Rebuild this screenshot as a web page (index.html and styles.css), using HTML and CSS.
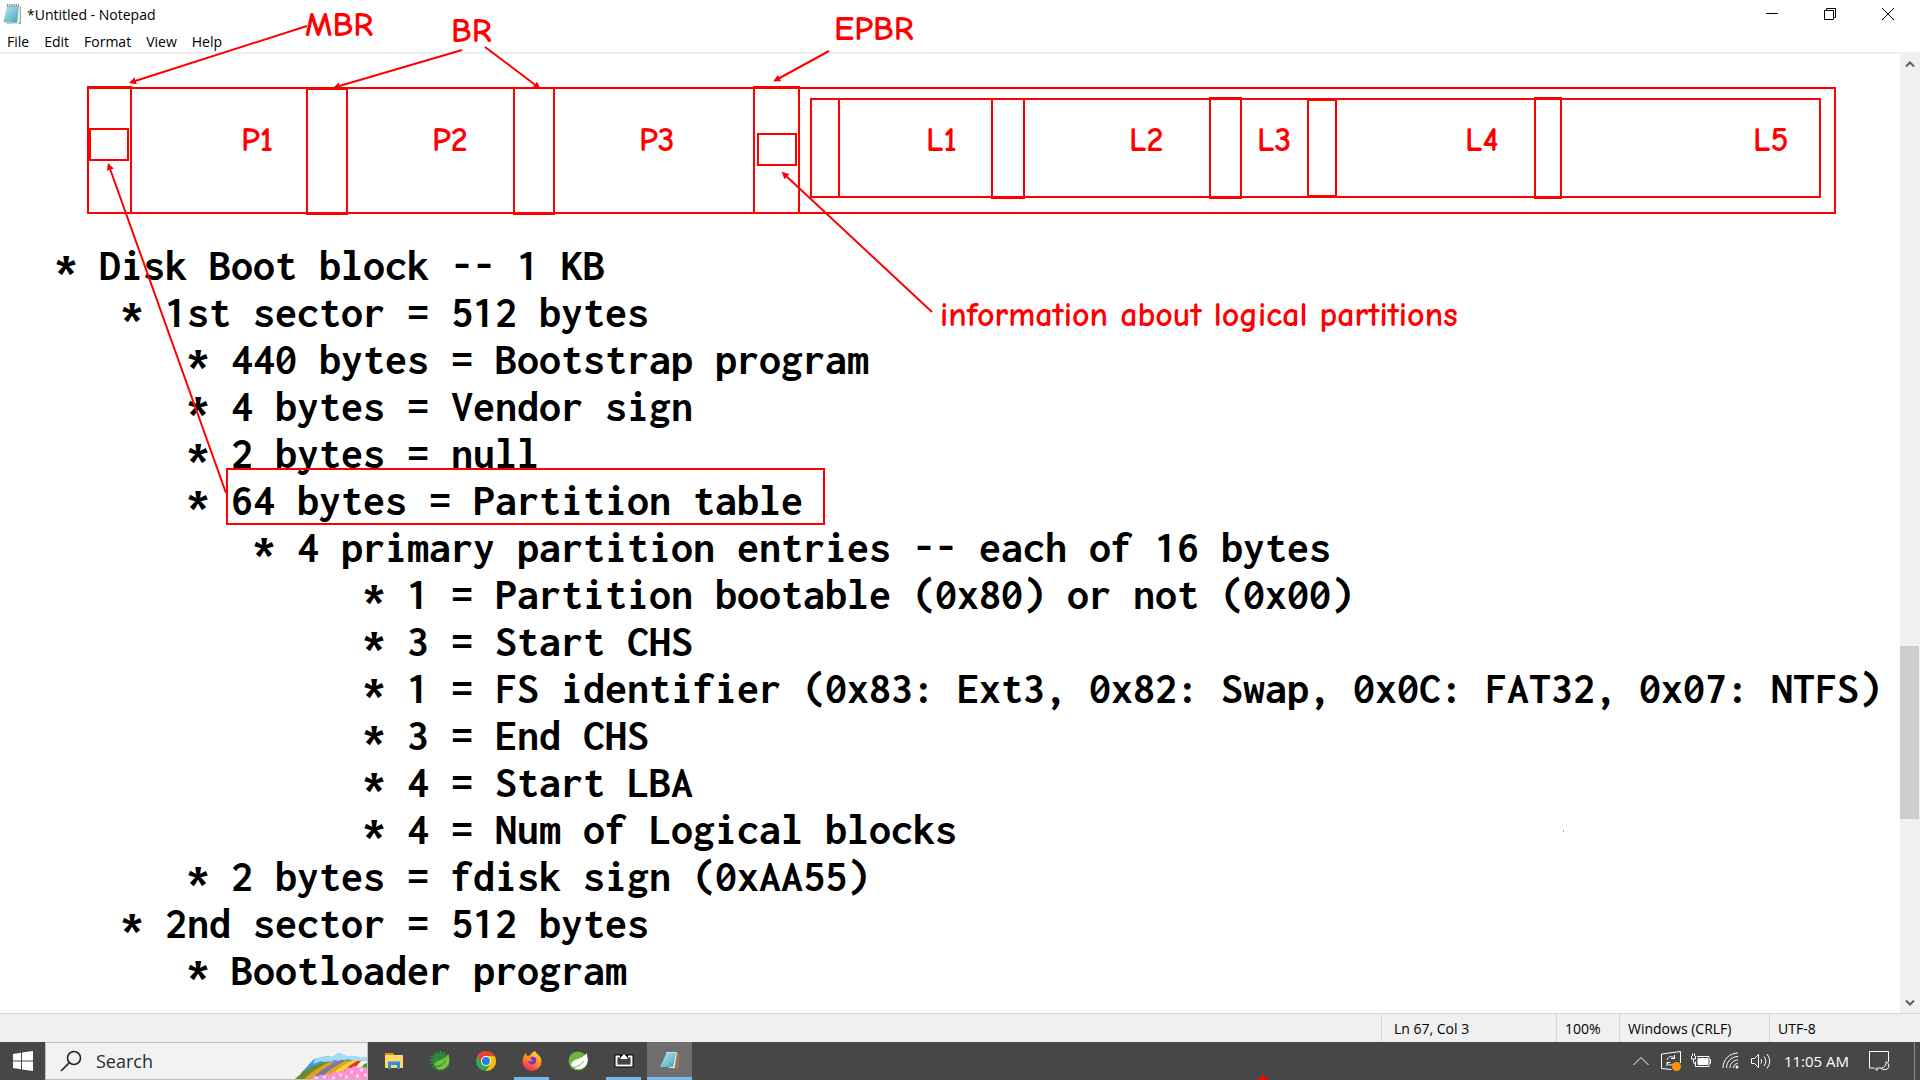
FILE: index.html
```html
<!DOCTYPE html>
<html lang="en">
<head>
<meta charset="utf-8">
<title>*Untitled - Notepad</title>
<link rel="stylesheet" href="styles.css">
</head>
<body>
<div class="desktop">
  <main class="window">
    <header class="titlebar">
      <svg class="app-icon" viewBox="0 0 20 24" aria-hidden="true">
        <defs>
          <linearGradient id="pad" x1="0" y1="0" x2="1" y2="1">
            <stop offset="0" stop-color="#b9e6ee"/><stop offset=".5" stop-color="#7fc8d8"/><stop offset="1" stop-color="#3f9db5"/>
          </linearGradient>
        </defs>
        <path d="M17 3l2 1v19H5l-2-1z" fill="#9b8a60"/>
        <path d="M4 3h14v18l-2 2-15-1z" fill="#e8f4f6"/>
        <path d="M4 3h13l-2 18.500L0 21z" fill="url(#pad)"/>
        <path d="M4 2.500h14" stroke="#7d8a8d" stroke-width="3" stroke-dasharray="1 1"/>
      </svg>
      <h1 class="title">*Untitled - Notepad</h1>
      <div class="controls">
        <button class="control" aria-label="Minimize"><svg width="14" height="14" viewBox="0 0 14 14"><path d="M1 6.500h12"/></svg></button>
        <button class="control" aria-label="Restore"><svg width="14" height="14" viewBox="0 0 14 14"><path d="M1.500 3.500h9v9h-9zM3.500 3.500v-2h9v9h-2"/></svg></button>
        <button class="control" aria-label="Close"><svg width="14" height="14" viewBox="0 0 14 14"><path d="M1 1l12 12M13 1L1 13"/></svg></button>
      </div>
    </header>
    <nav class="menubar" aria-label="Menu">
      <button>File</button><button>Edit</button><button>Format</button><button>View</button><button>Help</button>
    </nav>
    <section class="workspace">
      <textarea class="editor" aria-label="Text editor" spellcheck="false" wrap="off">




  * Disk Boot block -- 1 KB
     * 1st sector = 512 bytes
        * 440 bytes = Bootstrap program
        * 4 bytes = Vendor sign
        * 2 bytes = null
        * 64 bytes = Partition table
           * 4 primary partition entries -- each of 16 bytes
                * 1 = Partition bootable (0x80) or not (0x00)
                * 3 = Start CHS
                * 1 = FS identifier (0x83: Ext3, 0x82: Swap, 0x0C: FAT32, 0x07: NTFS)
                * 3 = End CHS
                * 4 = Start LBA
                * 4 = Num of Logical blocks
        * 2 bytes = fdisk sign (0xAA55)
     * 2nd sector = 512 bytes
        * Bootloader program</textarea>
      <div class="scrollbar">
        <button class="scroll-step" aria-label="Scroll up"><svg width="10" height="8" viewBox="0 0 10 8"><path d="M1 6.500l4-4 4 4"/></svg></button>
        <div class="scroll-track"><div class="scroll-thumb"></div></div>
        <button class="scroll-step" aria-label="Scroll down"><svg width="10" height="8" viewBox="0 0 10 8"><path d="M1 1.500l4 4 4-4"/></svg></button>
      </div>
    </section>
    <footer class="statusbar">
      <span class="status status-position">Ln 67, Col 3</span>
      <span class="status status-zoom">100%</span>
      <span class="status status-eol">Windows (CRLF)</span>
      <span class="status status-encoding">UTF-8</span>
    </footer>
  </main>

  <footer class="taskbar">
    <button class="start" aria-label="Start">
      <svg width="20" height="20" viewBox="0 0 20 20"><path fill="#fff" d="M0 3l8-1.200V9.500H0zM9 1.600L20 0v9.500H9zM0 10.500h8v7.700L0 17zM9 10.500h11V20L9 18.400z"/></svg>
    </button>
    <label class="search">
      <svg width="22" height="22" viewBox="0 0 22 22" fill="none" stroke="#222" stroke-width="1.600"><circle cx="14" cy="8" r="6.500"/><path d="M9.400 12.600L1 21"/></svg>
      <input type="text" placeholder="Search" aria-label="Search">
      <svg class="search-art" width="72" height="26" viewBox="0 0 72 26" aria-hidden="true">
        <path d="M6 20L19 6l6-1 6 -2 6 1 7-4 7 3 8 0 7 2 6-1v22H4z" fill="#3c9be0"/>
        <path d="M20 6l6-1 5-2 6 1 7-4 7 3h8l7 2 6-1v5l-6-1-6 1-7-3-6 3-7-2-7 3-7-2-8 3z" fill="#a5dafa"/>
        <path d="M0 26C16 12 34 6 72 8v18z" fill="#e3a21b"/>
        <path d="M0 26C10 16 22 10 36 8 26 13 16 19 9 26z" fill="#6d8b28"/>
        <path d="M17 26C26 17 34 11 46 7h6C40 13 31 19 25 26z" fill="#7b78a5"/>
        <path d="M33 26C40 18 48 11 58 8h4C53 14 46 20 42 26z" fill="#f6dc23"/>
        <path d="M42 26c6-8 11-13 20-18h6c-9 6-14 12-18 18z" fill="#e93323"/>
        <path d="M56 20l10-12h6v12z" fill="#f5f0e6"/>
        <path d="M63 20l6-9 3-1v10z" fill="#4b9f3c"/>
        <path d="M16 26q2-5 6-2 3-4 7-1 3-4 7-1 2-5 7-2 3-4 7-2 1-5 6-3 4-4 7 0 4-2 9 0v11z" fill="#ff8ed2"/>
        <path d="M20 25h3m5-1h3m6 1h3m4-3h3m3 2h3m2-5h3m3 4h3m1-6h3m1 5h3" stroke="#ffd5f0" stroke-width="3"/>
      </svg>
    </label>
    <div class="apps">
      <button class="app" aria-label="File Explorer">
        <svg width="20" height="20" viewBox="0 0 20 20"><path d="M1 2h8l1.500 2H1z" fill="#d99a10"/><path d="M1 4h18v13H1z" fill="#ffd76a"/><path d="M4 18v-7.500h12V18h-3v-4H7v4z" fill="#2f8fdd"/></svg>
      </button>
      <button class="app" aria-label="Spring Tools">
        <svg width="20" height="20" viewBox="0 0 20 20"><circle cx="10" cy="10" r="8" fill="#2c8a3a"/><circle cx="10" cy="10" r="9" fill="none" stroke="#2c8a3a" stroke-width="2" stroke-dasharray="2 1.500"/><path d="M18.500 3C20 9 20 15 14 18 9 20 5 17 4.500 14 5 8 15 10 18.500 3z" fill="#77c043"/><path d="M5 15.500c5 0 8-2 11-6" stroke="#2c7a30" fill="none"/></svg>
      </button>
      <button class="app" aria-label="Chrome">
        <svg width="20" height="20" viewBox="0 0 20 20"><circle cx="10" cy="10" r="10" fill="#34a853"/><path d="M10 10L1.340 5A10 10 0 0 1 18.660 5z" fill="#ea4335"/><path d="M10 5h8.660A10 10 0 0 1 10 20l4.300-7.500z" fill="#fbbc05"/><path d="M1.340 5A10 10 0 0 1 18.660 5H10L5.600 12.400z" fill="#ea4335"/><circle cx="10" cy="10" r="5" fill="#fff"/><circle cx="10" cy="10" r="4" fill="#2b7de9"/></svg>
      </button>
      <button class="app app-open" aria-label="Firefox">
        <svg width="20" height="20" viewBox="0 0 20 20"><defs><linearGradient id="fox" x1=".8" y1="0" x2=".3" y2="1"><stop offset="0" stop-color="#ffe03a"/><stop offset=".5" stop-color="#ff8a1f"/><stop offset="1" stop-color="#f2246b"/></linearGradient></defs><path d="M13 0c1 3 6 4 6.500 10A9.500 9.500 0 0 1 .5 11C.5 7 2 4 4 2l1 3 3-.5C9 2 11 1 13 0z" fill="url(#fox)"/><path d="M9 6c5-1 6 2 5 5-2 4-8 3-8-1 2 1 4 0 5-1-2 0-3-1-2-3z" fill="#7a35c9"/></svg>
      </button>
      <button class="app" aria-label="Spring">
        <svg width="20" height="20" viewBox="0 0 20 20"><circle cx="10" cy="10" r="9.500" fill="#6db33f"/><path d="M18.500 2C21 9 20 15 14 17.500 9 19 4 17 3 13.500 4 7 15 9 18.500 2z" fill="#fff"/><path d="M4 16.500c6-.5 9-3 12-7" stroke="#6db33f" fill="none"/></svg>
      </button>
      <button class="app app-open" aria-label="Screen tool">
        <svg width="20" height="20" viewBox="0 0 20 20"><path d="M.5 3.500h19v13H.5z" fill="#000"/><path d="M3.500 6.500h13v7h-13z" fill="#474747"/><path d="M6 5.500H2.500v9h15v-9H14" fill="none" stroke="#fff" stroke-width="2"/><path d="M10 2.500l4 4.500v1.500H6V7z" fill="#fff" stroke="#000" stroke-width=".6"/></svg>
      </button>
      <button class="app app-open app-active" aria-label="Notepad">
        <svg width="20" height="20" viewBox="0 0 20 20"><path d="M16 1l3.500 2-1 15H13z" fill="#9b7a4a"/><path d="M6 1h11l-2.500 16H9z" fill="#e8eef0"/><path d="M6.500 2H16l-3 14H0z" fill="url(#pad)"/><path d="M6.500 1.500H17" stroke="#cfd8da"/></svg>
      </button>
    </div>
    <div class="tray">
      <button class="tray-item" aria-label="Show hidden icons"><svg width="18" height="18" viewBox="0 0 18 18"><path d="M1.500 13L9 5.500l7.500 7.500"/></svg></button>
      <button class="tray-item" aria-label="Windows Update"><svg width="22" height="22" viewBox="0 0 22 22"><path d="M1.500 4L20.500 1.500V13M1.500 4v14.500l10 1M14.500 8.500C12.500 5.500 8 6 7 10M14.500 5v3.500H11M7 12.500c1.500 3 4.500 3 6 1.500M7 16v-3.500h3.500"/><circle cx="16.500" cy="16.500" r="4.500" fill="#ff9500" stroke="none"/></svg></button>
      <button class="tray-item" aria-label="Battery"><svg width="22" height="20" viewBox="0 0 22 20"><path d="M7 5.500h12v10H5.500v-5M19.500 8.500h1v4h-1M1.500 5v3h4V5M2.500 5V2.500M4.500 5V2.500M3.500 8v3q0 2 2 2"/><path d="M8 7.500h9.500v6H8z" fill="#fff"/></svg></button>
      <button class="tray-item" aria-label="Network"><svg width="18" height="20" viewBox="0 0 18 20"><path d="M1 17C1 8 8 2 16 2M4.500 17C4.500 10 10 5.500 16 5.500M8 17c0-5 4-8 8-8M11.500 17c0-3 2-4.500 4.500-4.500"/><circle cx="15" cy="16" r="1.500" fill="#fff" stroke="none"/></svg></button>
      <button class="tray-item" aria-label="Volume"><svg width="22" height="20" viewBox="0 0 22 20"><path d="M1.500 7.500h3l4-4v13l-4-4h-3zM11 8q1.500 2 0 4.500M14 5.500q3.500 4.500 0 9.500M17 3q5.500 7 0 14.500"/></svg></button>
      <time class="clock">11:05 AM</time>
      <button class="tray-item" aria-label="Notifications"><svg width="22" height="22" viewBox="0 0 22 22"><path d="M13 18H9v2.500L6.500 18h-5V1.500h19V12"/><path d="M18 11.500q1 5-5 7 6 3 8-2 0-3.500-3-5z"/></svg></button>
      <button class="show-desktop" aria-label="Show desktop"></button>
    </div>
  </footer>

  <!-- Pen annotations drawn over the whole screen -->
  <svg class="ink" role="img" aria-label="Disk layout diagram">
    <defs>
      <marker id="tip" markerUnits="userSpaceOnUse" markerWidth="8" markerHeight="8" refX="4" refY="4" orient="auto"><path d="M1 2l4 2-4 2z" class="tip"/></marker>
    </defs>
    <rect x="88" y="88" width="1747" height="125"/>
    <rect x="88" y="87" width="43" height="126"/>
    <rect x="90" y="129" width="38" height="31"/>
    <rect x="307" y="89" width="40" height="125"/>
    <rect x="514" y="88" width="40" height="126"/>
    <rect x="754" y="87" width="45" height="126"/>
    <rect x="758" y="134" width="38" height="31"/>
    <rect x="811" y="99" width="1009" height="98"/>
    <rect x="811" y="99" width="28" height="98"/>
    <rect x="992" y="99" width="32" height="99"/>
    <rect x="1210" y="98" width="31" height="100"/>
    <rect x="1308" y="100" width="28" height="96"/>
    <rect x="1535" y="98" width="26" height="100"/>
    <rect x="227" y="469" width="597" height="55"/>
    <path marker-end="url(#tip)" d="M307 26L132 82"/>
    <path marker-end="url(#tip)" d="M462 50L336 87"/>
    <path marker-end="url(#tip)" d="M485 47L538 87"/>
    <path marker-end="url(#tip)" d="M829 51L776 80"/>
    <path marker-end="url(#tip)" d="M932 312L784 174"/>
    <path marker-end="url(#tip)" d="M226 493L109 166"/>
    <path class="speck" d="M1563 831h1"/>
    <path d="M1258 1079h10M1263 1074v5"/>
    <text x="305" y="36">MBR</text>
    <text x="451" y="42">BR</text>
    <text x="834" y="40">EPBR</text>
    <text x="241" y="151">P1</text>
    <text x="432" y="151">P2</text>
    <text x="639" y="151">P3</text>
    <text x="926" y="151">L1</text>
    <text x="1129" y="151">L2</text>
    <text x="1257" y="151">L3</text>
    <text x="1465" y="151">L4</text>
    <text x="1753" y="151">L5</text>
    <text x="940" y="326">information about logical partitions</text>
  </svg>
</div>
</body>
</html>
```
FILE: styles.css
```css
* { box-sizing: border-box; }

body {
  margin: 0;
  font-family: "Open Sans", "Noto Sans", sans-serif;
  font-size: 14px;
  color: #000;
}

button {
  border: 0;
  padding: 0;
  background: none;
  font: inherit;
  color: inherit;
}

svg { display: block; flex: none; }

.desktop {
  position: relative;
  display: flex;
  flex-direction: column;
  height: 100vh;
  overflow: hidden;
}

.window {
  flex: 1;
  min-height: 0;
  display: flex;
  flex-direction: column;
  background: #fff;
}

/* Title bar */
.titlebar {
  display: flex;
  align-items: center;
  gap: 5px;
  height: 28px;
  padding: 0 3px;
}
.app-icon { width: 19px; height: 22px; }
.title { flex: 1; margin: 0; font-size: 14px; font-weight: 400; }
.controls { display: flex; }
.control { width: 58px; height: 28px; display: grid; place-items: center; }
.control svg { fill: none; stroke: #000; }

/* Menu */
.menubar {
  display: flex;
  gap: 15px;
  height: 26px;
  padding: 2px 7px 0;
  border-bottom: 2px solid #f0f0f0;
}

/* Editor */
.workspace { flex: 1; min-height: 0; display: flex; }
.editor {
  flex: 1;
  min-width: 0;
  margin: 0;
  border: 0;
  outline: 0;
  resize: none;
  overflow: hidden;
  padding: 0 0 0 11px;
  font: bold 44px/47px Inconsolata, "Liberation Mono", monospace;
  color: #000;
  white-space: pre;
}
.scrollbar {
  width: 20px;
  display: flex;
  flex-direction: column;
  background: #f0f0f0;
}
.scroll-step { height: 20px; display: grid; place-items: center; }
.scroll-step svg { fill: none; stroke: #606060; stroke-width: 2; }
.scroll-track { flex: 1; display: flex; flex-direction: column; }
.scroll-track::before { content: ""; flex: 572; }
.scroll-track::after { content: ""; flex: 174; }
.scroll-thumb { flex: 173; width: 19px; background: #cdcdcd; }

/* Status bar */
.statusbar {
  display: flex;
  justify-content: flex-end;
  height: 29px;
  border-top: 1px solid #d7d7d7;
  background: #f0f0f0;
}
.status {
  border-left: 1px solid #d7d7d7;
  padding-left: 8px;
  line-height: 29px;
}
.status-position { width: 175px; padding-left: 12px; }
.status-zoom { width: 63px; }
.status-eol { width: 150px; }
.status-encoding { width: 151px; }

/* Taskbar */
.taskbar {
  display: flex;
  height: 38px;
  background: #474747;
  color: #fff;
}
.start { width: 45px; display: grid; place-items: center; }
.search {
  width: 323px;
  display: flex;
  align-items: center;
  gap: 14px;
  padding-left: 14px;
  border: 1px solid #bdbdbd;
  background: #f2f2f2;
}
.search input {
  flex: 1;
  min-width: 0;
  border: 0;
  padding: 0;
  outline: 0;
  background: none;
  font: 18px "Open Sans", sans-serif;
}
.search input::placeholder { color: #2b2b2b; opacity: 1; }
.search-art { align-self: flex-end; }
.apps { display: flex; gap: 1px; padding-left: 3px; }
.app {
  width: 45px;
  height: 38px;
  display: grid;
  place-items: center;
  background: linear-gradient(#76b9ed, #76b9ed) no-repeat center bottom / 0 3px;
}
.app-open { background-size: 35px 3px; }
.app-active { background-color: #6e6e6e; background-size: 45px 3px; }

.tray { margin-left: auto; display: flex; align-items: center; }
.tray-item { width: 30px; height: 38px; display: grid; place-items: center; }
.tray-item svg { fill: none; stroke: #fff; }
.clock { padding: 0 15px 0 8px; font-size: 15px; }
.show-desktop { width: 6px; height: 38px; margin-left: 20px; border-left: 1px solid #8a8a8a; }

/* Annotations */
.ink {
  position: absolute;
  inset: 0;
  width: 100%;
  height: 100%;
  pointer-events: none;
  fill: none;
  stroke: #f00;
  stroke-width: 2;
}
.ink .tip { fill: #f00; }
.ink .speck { stroke-width: 1; }
.ink text {
  fill: #f00;
  stroke: none;
  font: bold 34px "Comic Sans MS", "Comic Neue", "Noto Sans", sans-serif;
}
```
